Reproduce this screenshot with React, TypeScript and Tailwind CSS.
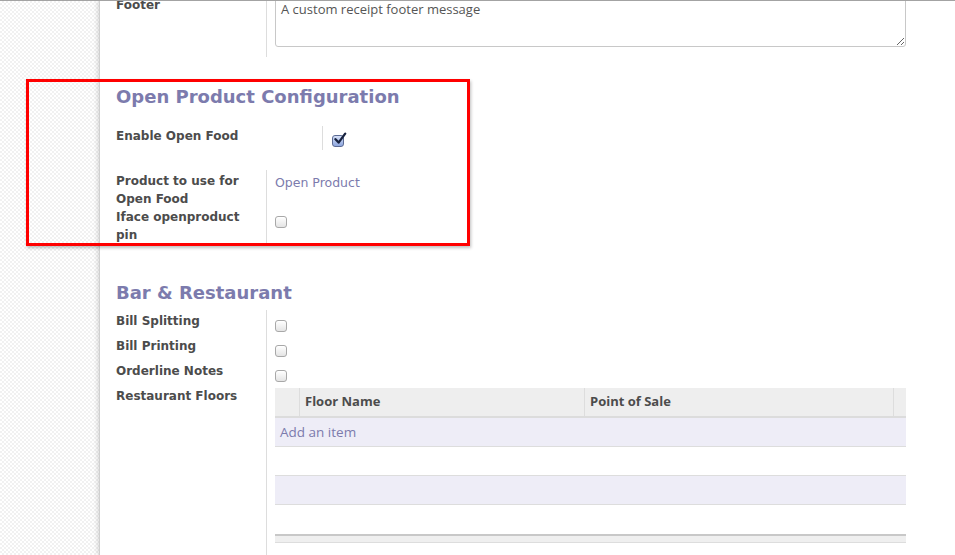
import React from "react"

const label = "font-['DejaVu_Sans',sans-serif] text-[12px] font-bold leading-[18px] text-[#4c4c4c]"
const heading = "font-['DejaVu_Sans',sans-serif] text-[18px] font-bold leading-[24px] text-[#7c7bad]"

function Checkbox({ checked }: { checked?: boolean }) {
    if (checked) {
        return (
            <span className="relative block h-[12px] w-[12px] rounded-[3px] border border-[#5b6a94] bg-gradient-to-b from-[#d6e0f7] to-[#8ea6de]">
                <svg className="absolute -top-[4px] left-[0px] h-[14px] w-[14px]" viewBox="0 0 14 14">
                    <path d="M2.5 7.2 L5.6 10.6 L12.2 1.6" fill="none" stroke="#17223f" strokeWidth="2.3" strokeLinecap="round" strokeLinejoin="round" />
                </svg>
            </span>
        )
    }
    return (
        <span className="block h-[12px] w-[12px] rounded-[3px] border border-[#a8a8a8] bg-gradient-to-b from-[#ffffff] to-[#e4e4e4] shadow-[inset_0_1px_0_#fff]" />
    )
}

function FieldRow({ name, h, children }: { name: string; h: string; children: React.ReactNode }) {
    return (
        <div className={`flex ${h}`}>
            <div className={`w-[151px] shrink-0 border-r border-[#dddddd] pt-[2px] ${label}`}>{name}</div>
            <div className="flex-1 pl-[8px] pt-[10px]">{children}</div>
        </div>
    )
}

function FloorsTable() {
    const rows = ["bg-[#eeedf7]", "bg-white", "bg-[#eeedf7]", "bg-white"]
    return (
        <div className="font-['Open_Sans',sans-serif]">
            <div className="flex h-[30px] border-b-2 border-[#dcdcdc] bg-[#eeeeee] text-[13px] font-bold text-[#4c4c4c]">
                <div className="w-[25px] border-r border-[#dddddd]" />
                <div className="flex w-[285px] items-center border-r border-[#dddddd] pl-[5px]">Floor Name</div>
                <div className="flex w-[309px] items-center border-r border-[#dddddd] pl-[5px]">Point of Sale</div>
                <div className="flex-1" />
            </div>
            {rows.map((bg, i) => (
                <div
                    key={i}
                    className={`flex h-[29px] items-center pl-[5px] text-[13.5px] text-[#7c7bad] ${bg} ${i < 3 ? "border-b border-[#dddddd]" : ""}`}
                >
                    {i === 0 ? "Add an item" : null}
                </div>
            ))}
            <div className="h-[9px] border-t-2 border-b border-t-[#c8c8c8] border-b-[#dddddd] bg-[#efefef]" />
        </div>
    )
}

export default function App() {
    return (
        <div className="relative flex h-[555px] w-[955px] flex-col overflow-hidden bg-white">
            <div className="h-[1px] bg-[#a3a3a3]" />
            <div className="flex flex-1 overflow-hidden">
                {/* checkered backdrop */}
                <div className="w-[99px] shrink-0 bg-[image:repeating-conic-gradient(#f1f1f1_0%_25%,#ffffff_0%_50%)] bg-[length:4px_4px]" />

                {/* form sheet */}
                <div className="relative z-10 flex-1 border-l border-[#d0d0d0] bg-white pl-[16px] pr-[49px] shadow-[-2px_0_4px_rgba(0,0,0,0.12)]">
                    <div className="-mt-[7px]">
                        {/* footer */}
                        <div className="flex">
                            <div className={`w-[151px] shrink-0 border-r border-[#dddddd] pt-[2px] ${label}`}>Footer</div>
                            <div className="flex-1 pb-[10px] pl-[8px]">
                                <textarea
                                    readOnly
                                    defaultValue="A custom receipt footer message"
                                    className="block h-[53px] w-full rounded-[3px] border border-[#c8c8c8] px-[5px] pt-[5px] font-['Open_Sans',sans-serif] text-[13px] leading-[18px] text-[#555555] outline-none"
                                />
                            </div>
                        </div>

                        {/* open product */}
                        <h2 className={`mt-[28px] ${heading}`}>Open Product Configuration</h2>
                        <div className="mt-[17px] flex h-[24px]">
                            <div className={`w-[207px] shrink-0 border-r border-[#dddddd] pt-[1px] ${label}`}>Enable Open Food</div>
                            <div className="pl-[9px] pt-[9px]">
                                <Checkbox checked />
                            </div>
                        </div>
                        <div className="mt-[20px]">
                            <div className="flex h-[38px]">
                                <div className={`w-[151px] shrink-0 border-r border-[#dddddd] pt-[2px] ${label}`}>
                                    Product to use for<br />Open Food
                                </div>
                                <div className="pl-[8px] pt-[4px] font-['DejaVu_Sans',sans-serif] text-[12.5px] leading-[18px] text-[#7c7bad]">
                                    Open Product
                                </div>
                            </div>
                            <div className="flex h-[35px]">
                                <div className={`w-[151px] shrink-0 border-r border-[#dddddd] ${label}`}>
                                    Iface openproduct<br />pin
                                </div>
                                <div className="pl-[8px] pt-[8px]">
                                    <Checkbox />
                                </div>
                            </div>
                        </div>

                        {/* bar & restaurant */}
                        <h2 className={`mt-[38px] ${heading}`}>Bar &amp; Restaurant</h2>
                        <div className="mt-[5px]">
                            <FieldRow name="Bill Splitting" h="h-[25px]"><Checkbox /></FieldRow>
                            <FieldRow name="Bill Printing" h="h-[25px]"><Checkbox /></FieldRow>
                            <FieldRow name="Orderline Notes" h="h-[25px]"><Checkbox /></FieldRow>
                            <div className="flex">
                                <div className={`w-[151px] shrink-0 border-r border-[#dddddd] pt-[2px] ${label}`}>Restaurant Floors</div>
                                <div className="flex-1 pb-[30px] pl-[8px] pt-[3px]">
                                    <FloorsTable />
                                </div>
                            </div>
                        </div>
                    </div>
                </div>
            </div>

            {/* red annotation box */}
            <div className="pointer-events-none absolute left-[26px] top-[79px] z-20 h-[167px] w-[444px] border-[3px] border-[#ff0000] shadow-[1px_2px_3px_rgba(0,0,0,0.25)]" />
        </div>
    )
}
